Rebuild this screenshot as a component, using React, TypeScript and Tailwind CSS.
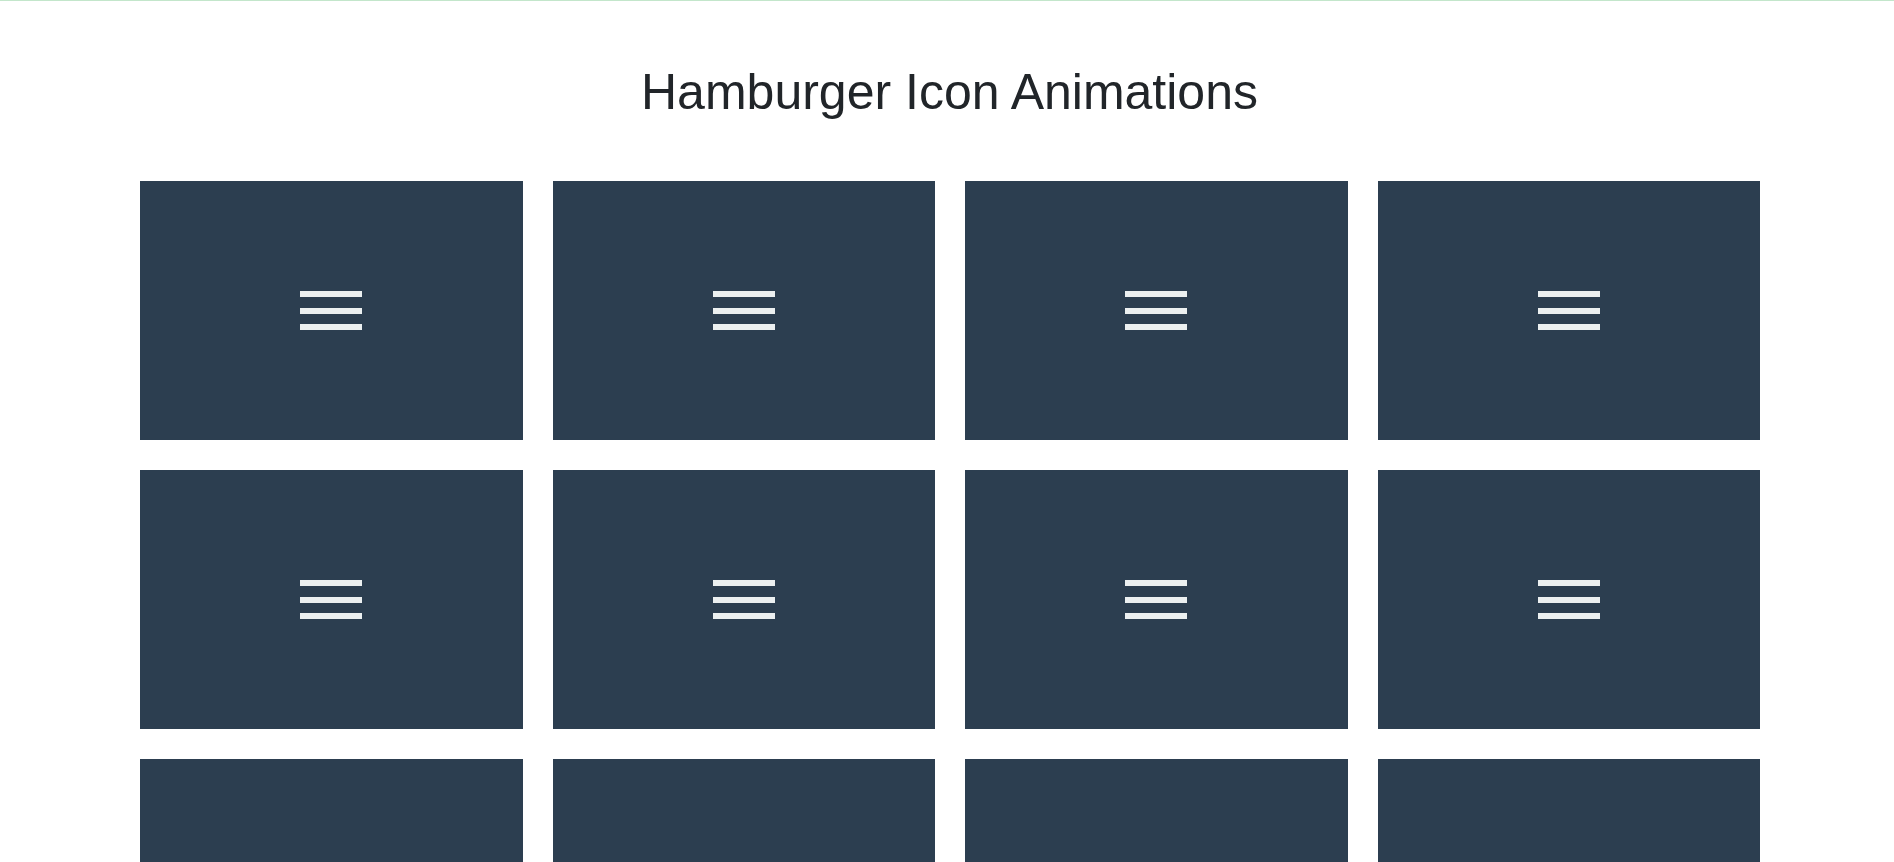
const cards = Array.from({ length: 16 }, (_, i) => i);

function Hamburger() {
  return (
    <div className="flex flex-col gap-[10.5px] w-[62px]">
      <span className="block h-[6px] bg-[#ecf0f1]" />
      <span className="block h-[6px] bg-[#ecf0f1]" />
      <span className="block h-[6px] bg-[#ecf0f1]" />
    </div>
  );
}

export default function App() {
  return (
    <div className="min-h-screen bg-white border-t border-[#c3e6cb] font-['Liberation_Sans',Arial,sans-serif] text-[#212529]">
      <h1 className="pt-[61px] pl-[5px] text-center text-[50px] leading-[60px] font-normal">
        Hamburger Icon Animations
      </h1>

      {/* grid of demo tiles */}
      <div className="mt-[59px] ml-[140px] w-[1620px] grid grid-cols-4 gap-[30px] pb-[30px]">
        {cards.map((c) => (
          <div
            key={c}
            className="h-[259px] bg-[#2c3e50] flex items-center justify-center cursor-pointer"
          >
            <Hamburger />
          </div>
        ))}
      </div>
    </div>
  );
}
